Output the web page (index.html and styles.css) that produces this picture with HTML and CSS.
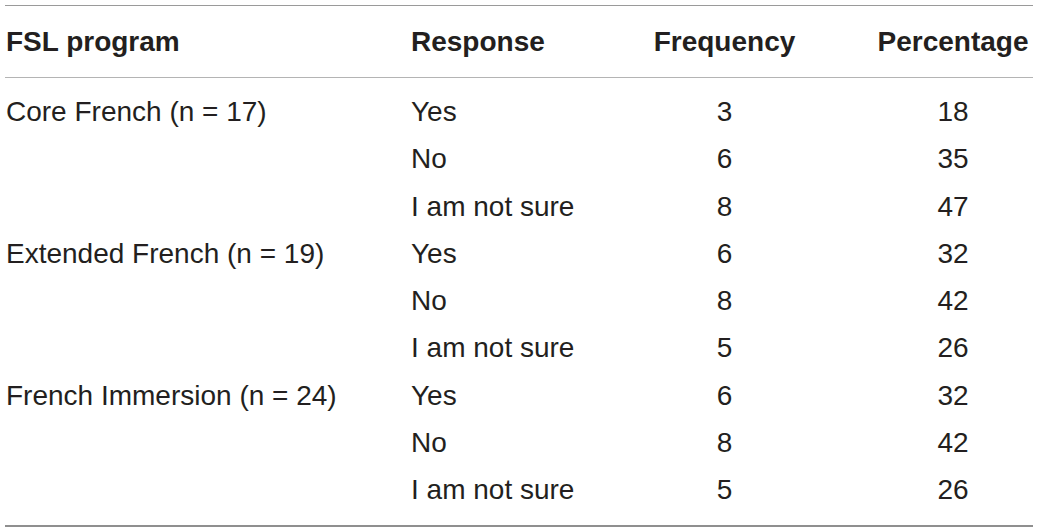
FILE: index.html
```html
<!DOCTYPE html>
<html>
<head>
<meta charset="utf-8">
<link rel="stylesheet" href="styles.css">
</head>
<body>
<table class="data">
  <colgroup>
    <col class="c-prog">
    <col class="c-resp">
    <col class="c-freq">
    <col class="c-pct">
  </colgroup>
  <thead>
    <tr>
      <th class="left">FSL program</th>
      <th class="left">Response</th>
      <th class="center">Frequency</th>
      <th class="center">Percentage</th>
    </tr>
  </thead>
  <tbody>
    <tr class="first"><td>Core French (n = 17)</td><td>Yes</td><td class="center">3</td><td class="center">18</td></tr>
    <tr><td></td><td>No</td><td class="center">6</td><td class="center">35</td></tr>
    <tr><td></td><td>I am not sure</td><td class="center">8</td><td class="center">47</td></tr>
    <tr><td>Extended French (n = 19)</td><td>Yes</td><td class="center">6</td><td class="center">32</td></tr>
    <tr><td></td><td>No</td><td class="center">8</td><td class="center">42</td></tr>
    <tr><td></td><td>I am not sure</td><td class="center">5</td><td class="center">26</td></tr>
    <tr><td>French Immersion (n = 24)</td><td>Yes</td><td class="center">6</td><td class="center">32</td></tr>
    <tr><td></td><td>No</td><td class="center">8</td><td class="center">42</td></tr>
    <tr class="last"><td></td><td>I am not sure</td><td class="center">5</td><td class="center">26</td></tr>
  </tbody>
</table>
</body>
</html>
```
FILE: styles.css
```css
html, body {
  margin: 0;
  padding: 0;
  background: #ffffff;
}

body {
  font-family: "Liberation Sans", Arial, Helvetica, sans-serif;
  color: #231f20;
}

.data {
  margin: 5px 0 0 5px;
  width: 1028px;
  border-collapse: collapse;
  table-layout: fixed;
  font-size: 28px;
}

.c-prog { width: 406px; }
.c-resp { width: 165px; }
.c-freq { width: 297px; }
.c-pct  { width: 160px; }

.data th,
.data td {
  padding: 0;
  font-weight: normal;
  white-space: nowrap;
}

.data th {
  font-weight: bold;
  height: 71px;
  line-height: 32px;
  vertical-align: middle;
  border-top: 1px solid #9a9a9a;
  border-bottom: 1px solid #b4b4b4;
}

.data td {
  height: 47.25px;
  line-height: 47.25px;
  vertical-align: middle;
}

.data .left { text-align: left; }
.data .center { text-align: center; }

.data tr > :first-child { padding-left: 1px; }

.data tr.first td { padding-top: 10px; }
.data tr.last td {
  padding-bottom: 12px;
  border-bottom: 2px solid #8f8f8f;
}
```
